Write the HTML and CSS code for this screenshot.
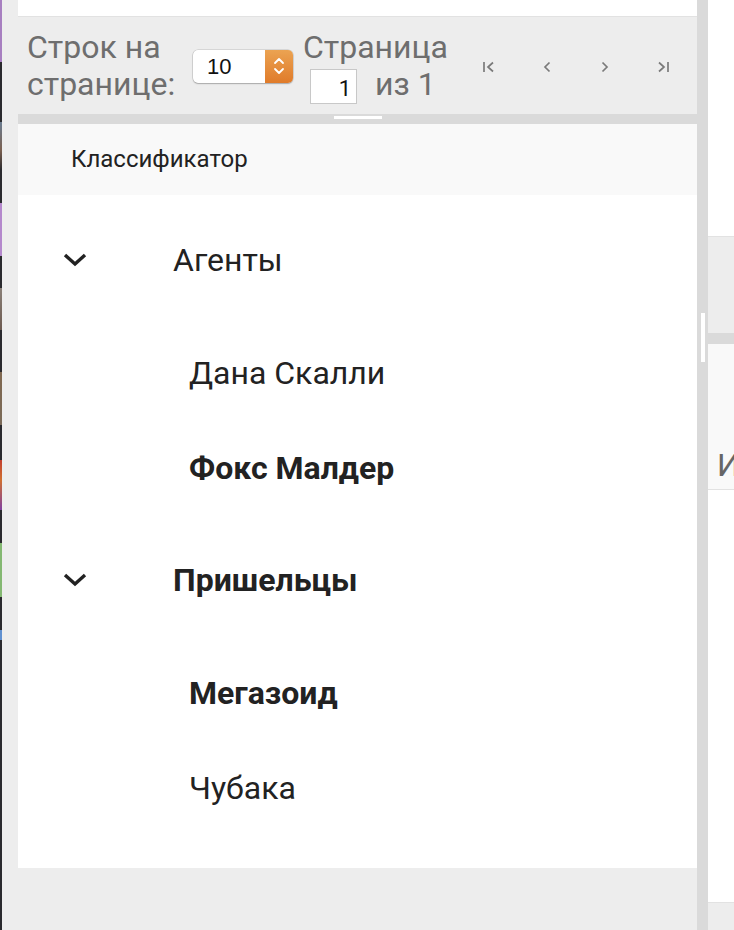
FILE: index.html
```html
<!DOCTYPE html>
<html lang="ru">
<head>
<meta charset="utf-8">
<link rel="stylesheet" href="styles.css">
</head>
<body>
<div class="screen">
  <div class="strip"></div>
  <div class="left">
    <div class="top-white"></div>
    <div class="pager">
      <div class="pager-label">Строк на<br>странице:</div>
      <div class="select">
        <span class="select-value">10</span>
        <span class="select-btn">
          <svg width="14" height="22" viewBox="0 0 14 22"><path d="M3 8 L7 4 L11 8" fill="none" stroke="#fff" stroke-width="1.8" stroke-linecap="round" stroke-linejoin="round"/><path d="M3 14 L7 18 L11 14" fill="none" stroke="#fff" stroke-width="1.8" stroke-linecap="round" stroke-linejoin="round"/></svg>
        </span>
      </div>
      <div class="page-block">
        <div class="page-title">Страница</div>
        <div class="page-line">
          <span class="page-input">1</span>
          <span class="page-of">из 1</span>
        </div>
      </div>
      <div class="nav">
        <svg class="nav-ico" width="16" height="16" viewBox="0 0 16 16"><path d="M3 3 V13" stroke="#7a7a7a" stroke-width="1.7" fill="none"/><path d="M12 3.5 L7 8 L12 12.5" stroke="#7a7a7a" stroke-width="1.7" fill="none"/></svg>
        <svg class="nav-ico" width="16" height="16" viewBox="0 0 16 16"><path d="M10.5 3.5 L6 8 L10.5 12.5" stroke="#7a7a7a" stroke-width="1.7" fill="none"/></svg>
        <svg class="nav-ico" width="16" height="16" viewBox="0 0 16 16"><path d="M5.5 3.5 L10 8 L5.5 12.5" stroke="#7a7a7a" stroke-width="1.7" fill="none"/></svg>
        <svg class="nav-ico" width="16" height="16" viewBox="0 0 16 16"><path d="M4 3.5 L9 8 L4 12.5" stroke="#7a7a7a" stroke-width="1.7" fill="none"/><path d="M13 3 V13" stroke="#7a7a7a" stroke-width="1.7" fill="none"/></svg>
      </div>
    </div>
    <div class="hsplit"><span class="hhandle"></span></div>
    <div class="panel">
      <div class="panel-head">Классификатор</div>
      <div class="tree">
        <div class="node parent">
          <svg class="chev" width="26" height="16" viewBox="0 0 26 16"><path d="M3 3 L13 12 L23 3" fill="none" stroke="#222" stroke-width="3.4"/></svg>
          <span class="label">Агенты</span>
        </div>
        <div class="node child"><span class="label">Дана Скалли</span></div>
        <div class="node child"><span class="label bold">Фокс Малдер</span></div>
        <div class="node parent">
          <svg class="chev" width="26" height="16" viewBox="0 0 26 16"><path d="M3 3 L13 12 L23 3" fill="none" stroke="#222" stroke-width="3.4"/></svg>
          <span class="label bold">Пришельцы</span>
        </div>
        <div class="node child"><span class="label bold">Мегазоид</span></div>
        <div class="node child"><span class="label">Чубака</span></div>
      </div>
    </div>
  </div>
  <div class="vsplit"><span class="vhandle"></span></div>
  <div class="right">
    <div class="r-white"></div>
    <div class="r-gray"></div>
    <div class="r-band"></div>
    <div class="r-head">И</div>
    <div class="r-body"></div>
    <div class="r-foot"></div>
  </div>
</div>
</body>
</html>
```
FILE: styles.css
```css
html, body {
  margin: 0;
  padding: 0;
}
body {
  width: 734px;
  height: 930px;
  overflow: hidden;
  background: #ededed;
  font-family: Roboto, "Noto Sans", sans-serif;
}
.screen {
  display: flex;
  height: 930px;
}
.strip {
  width: 2px;
  flex: none;
  background: linear-gradient(to bottom,
    #a77fc0 0px, #a77fc0 62px, #2a2a2e 62px, #2a2a2e 122px,
    #6a7c90 122px, #7a6050 150px, #2a2a2e 170px, #2a2a2e 203px,
    #b488cc 203px, #b488cc 256px, #2a2a2e 256px, #2a2a2e 288px,
    #8a8078 288px, #6c5a50 330px, #2a2a2e 330px, #2a2a2e 372px,
    #806850 372px, #7a6a58 425px, #2a2a2e 425px, #2a2a2e 460px,
    #c24030 460px, #d07030 480px, #8040a0 510px, #2a2a2e 510px, #2a2a2e 543px,
    #84b872 543px, #84b872 597px, #2a2a2e 597px, #2a2a2e 630px,
    #6090d0 630px, #6090d0 640px, #2a2a2e 640px, #2a2a2e 930px);
}
.left {
  width: 695px;
  box-sizing: border-box;
  flex: none;
  padding-left: 16px;
  display: flex;
  flex-direction: column;
}
.top-white {
  height: 16px;
  background: #fff;
  border-bottom: 1px solid #e2e2e2;
}
.pager {
  height: 97px;
  display: flex;
  align-items: center;
  background: #ededed;
  color: #6e6e6e;
  font-size: 32px;
  line-height: 37px;
}
.pager-label {
  margin-left: 9px;
  width: 166px;
  flex: none;
  white-space: nowrap;
}
.select {
  width: 100px;
  height: 33px;
  flex: none;
  display: flex;
  border-radius: 5px;
  background: #fff;
  box-shadow: 0 0 0 0.5px rgba(0,0,0,0.18), 0 1px 1.5px rgba(0,0,0,0.22);
  overflow: hidden;
  margin-top: 1px;
}
.select-value {
  flex: 1;
  font-family: "Liberation Sans", Arial, sans-serif;
  font-size: 22px;
  line-height: 33px;
  color: #111;
  padding-left: 14px;
}
.select-btn {
  width: 28px;
  display: flex;
  align-items: center;
  justify-content: center;
  background: linear-gradient(to bottom, #eba352, #e07b2a);
}
.page-block {
  margin-left: 10px;
  width: 160px;
  flex: none;
  white-space: nowrap;
}
.page-title {
  height: 37px;
}
.page-line {
  display: flex;
  align-items: center;
  height: 37px;
}
.page-input {
  margin-left: 7px;
  width: 47px;
  height: 35px;
  box-sizing: border-box;
  border: 1px solid #c8c8c8;
  background: #fff;
  color: #111;
  font-size: 22px;
  line-height: 37px;
  text-align: right;
  padding-right: 5px;
  margin-top: 4px;
}
.page-of {
  margin-left: 18px;
}
.nav {
  display: flex;
  gap: 42px;
  margin-left: 18px;
  margin-top: 2px;
}
.nav-ico {
  display: block;
}
.hsplit {
  height: 10px;
  background: #dadada;
  display: flex;
  justify-content: center;
}
.hhandle {
  width: 48px;
  height: 3px;
  margin-top: 2px;
  background: #fff;
}
.panel {
  background: #fff;
}
.panel-head {
  height: 71px;
  background: #f9f9f9;
  padding-left: 53px;
  font-size: 24px;
  line-height: 71px;
  color: #222;
}
.tree {
  padding-bottom: 33px;
  color: #222;
  font-size: 32px;
}
.node {
  display: flex;
  align-items: center;
}
.node.parent {
  height: 130px;
  padding-left: 44px;
}
.node.child {
  height: 95px;
  padding-left: 171px;
}
.chev {
  display: block;
  width: 26px;
  margin-right: 85px;
}
.label.bold {
  font-weight: 700;
}
.vsplit {
  width: 11px;
  flex: none;
  background: #dadada;
  display: flex;
  flex-direction: column;
  align-items: center;
}
.vhandle {
  width: 4px;
  height: 49px;
  margin-top: 313px;
  background: #fff;
}
.right {
  flex: 1;
  display: flex;
  flex-direction: column;
}
.r-white {
  height: 236px;
  background: #fff;
  border-bottom: 1px solid #e2e2e2;
}
.r-gray {
  height: 96px;
  background: #ededed;
}
.r-band {
  height: 11px;
  background: #dadada;
}
.r-head {
  height: 146px;
  background: #f9f9f9;
  border-bottom: 1px solid #e2e2e2;
  font-size: 32px;
  color: #666;
  padding-left: 9px;
  padding-top: 105px;
  box-sizing: border-box;
  line-height: 32px;
  overflow: hidden;
}
.r-body {
  height: 412px;
  background: #fff;
  border-bottom: 1px solid #e2e2e2;
}
.r-foot {
  flex: 1;
  background: #ededed;
}
```
